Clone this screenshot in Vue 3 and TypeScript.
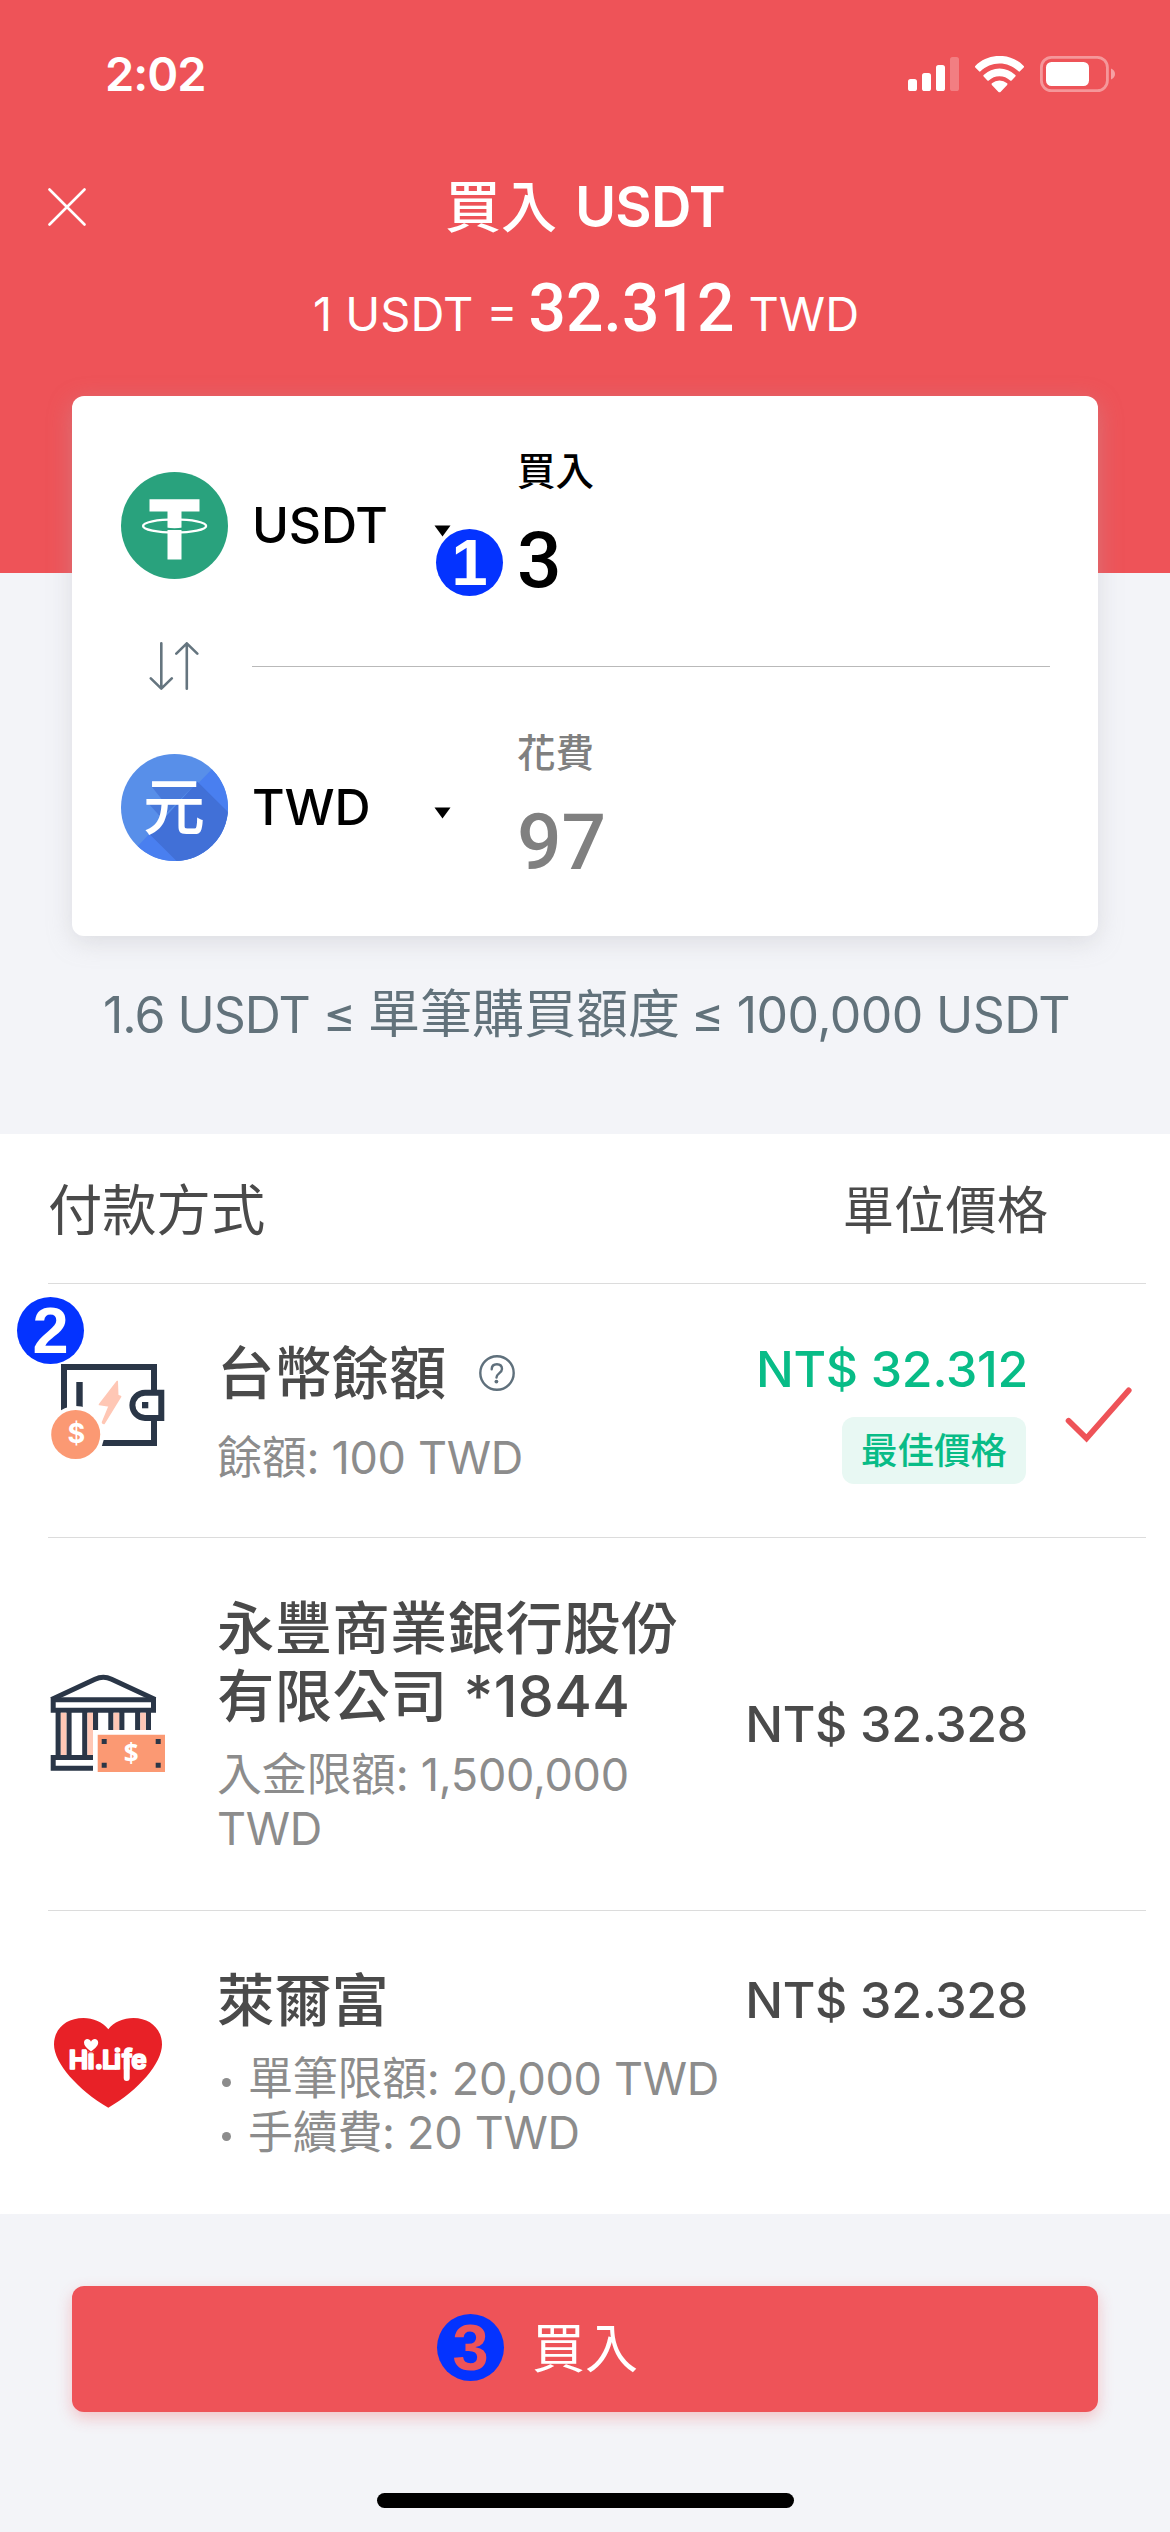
<script setup lang="ts">
interface PaymentMethod {
  id: 'wallet' | 'bank' | 'hilife'
  name: string
  suffix?: string
  notes: string[]
  bulleted: boolean
  price: string
  best: boolean
  selected: boolean
}

const methods: PaymentMethod[] = [
  { id: 'wallet', name: '台幣餘額', notes: ['餘額: 100 TWD'], bulleted: false, price: 'NT$ 32.312', best: true, selected: true },
  { id: 'bank', name: '永豐商業銀行股份有限公司 *1844', notes: ['入金限額: 1,500,000 TWD'], bulleted: false, price: 'NT$ 32.328', best: false, selected: false },
  { id: 'hilife', name: '萊爾富', notes: ['單筆限額: 20,000 TWD', '手續費: 20 TWD'], bulleted: true, price: 'NT$ 32.328', best: false, selected: false },
]
</script>

<template>
  <div class="screen">
    <header class="header">
      <div class="status">
        <span class="time">2:02</span>
        <div class="status-icons">
          <svg class="signal" width="52" height="36" viewBox="0 0 52 36" fill="#fff">
            <rect x="0" y="23" width="9" height="12" rx="2.6" />
            <rect x="14" y="17" width="9" height="18" rx="2.6" />
            <rect x="28" y="9" width="9" height="26" rx="2.6" />
            <rect x="42" y="1" width="9" height="34" rx="2.6" opacity=".25" />
          </svg>
          <svg class="wifi" width="49" height="37" viewBox="0 -.2 17 12.4" preserveAspectRatio="none" fill="#fff">
            <path d="M8.5 2.3c2.5 0 4.8.95 6.6 2.64a.36.36 0 0 0 .5 0l1.3-1.3a.37.37 0 0 0 0-.53c-4.7-4.48-12.1-4.48-16.8 0a.37.37 0 0 0 0 .53l1.3 1.3c.14.13.36.13.5 0C3.7 3.25 6 2.3 8.5 2.3Z" />
            <path d="M8.5 6.6c1.37 0 2.7.5 3.7 1.42.14.14.36.13.5 0l1.3-1.33a.38.38 0 0 0 0-.54 8.1 8.1 0 0 0-11 0 .38.38 0 0 0 0 .54l1.3 1.33c.14.13.36.14.5 0A5.4 5.4 0 0 1 8.5 6.6Z" />
            <path d="M11.15 9.5c.15-.14.15-.4-.01-.54a4.2 4.2 0 0 0-5.28 0 .38.38 0 0 0-.01.54l2.3 2.33c.1.1.22.1.35.1s.25 0 .35-.1l2.3-2.33Z" />
          </svg>
          <svg class="battery" width="76" height="36" viewBox="0 0 76 36">
            <rect x="1.4" y="1.4" width="66" height="33.2" rx="10" fill="none" stroke="#fff" stroke-opacity=".4" stroke-width="2.8" />
            <path d="M71 12.5c2.6.9 4 3 4 5.500s-1.400 4.600-4 5.500z" fill="#fff" fill-opacity=".45" />
            <rect x="6" y="6" width="43" height="24" rx="5.500" fill="#fff" />
          </svg>
        </div>
      </div>

      <div class="nav">
        <svg class="close" width="38" height="38" viewBox="0 0 38 38" stroke="#fff" stroke-width="2.6" stroke-linecap="round">
          <path d="M1.500 1.500 36.500 36.500M36.500 1.500 1.500 36.500" />
        </svg>
        <h1>買入 <b>USDT</b></h1>
      </div>

      <div class="rate">
        <span>1 USDT =</span>
        <strong>32.312</strong>
        <span>TWD</span>
      </div>
    </header>

    <section class="card">
      <div class="coin-row first">
        <svg width="107" height="107" viewBox="0 0 107 107">
          <circle cx="53.500" cy="53.500" r="53.500" fill="#29a27d" />
          <path d="M28.500 27.300h50v12.300h-18v48h-14v-48h-18z" fill="#fff" />
          <path d="M45 55.600q8.500 1.400 17 0v2.400h-17z" fill="#29a27d" />
          <ellipse cx="53.600" cy="54" rx="31.500" ry="6.600" fill="none" stroke="#fff" stroke-width="2.400" />
        </svg>
        <span class="code">USDT</span>
        <svg class="caret" width="17" height="12" viewBox="0 0 17 12"><path d="M.5.5h16L8.500 11.500z" /></svg>
        <div class="amount">
          <span class="label">買入</span>
          <span class="value">3</span>
        </div>
        <span class="step step-one">1</span>
      </div>

      <div class="swap">
        <svg width="50" height="48" viewBox="0 0 50 48" fill="none" stroke="#65757f" stroke-width="2.600" stroke-linecap="round" stroke-linejoin="round">
          <path d="M12.300 1.300v45.200M1.800 36.300 12.300 46.700 22.800 36.300M37.800 46.700V1.500M27.300 11.700 37.800 1.300 48.300 11.700" />
        </svg>
        <i class="rule"></i>
      </div>

      <div class="coin-row last">
        <svg width="107" height="107" viewBox="0 0 107 107">
          <clipPath id="disc"><circle cx="53.500" cy="53.500" r="53.500" /></clipPath>
          <g clip-path="url(#disc)">
            <rect width="107" height="107" fill="#588fe9" />
            <path d="M107-1.500V107H2.300z" fill="#497ff0" />
            <path d="M31 32h41.500L49 55.700 31 33zM26.800 48.700H56L40.500 64z" fill="#4879da" />
            <path d="M76.500 27.700 107 58v49H55.500L28.700 80.300z" fill="#4170d7" />
          </g>
          <text x="53" y="75.500" text-anchor="middle" class="yuan">元</text>
        </svg>
        <span class="code">TWD</span>
        <svg class="caret" width="17" height="12" viewBox="0 0 17 12"><path d="M.5.5h16L8.500 11.500z" /></svg>
        <div class="amount muted">
          <span class="label">花費</span>
          <span class="value">97</span>
        </div>
      </div>
    </section>

    <p class="limit">
      <span class="low">1.6 USDT ≤ </span><span class="mid">單筆購買額度</span><span class="high">≤ 100,000 USDT</span>
    </p>

    <section class="methods">
      <div class="list-head">
        <span>付款方式</span>
        <span class="unit">單位價格</span>
      </div>

      <div v-for="m in methods" :key="m.id" class="method" :class="m.id">
        <div class="icon">
          <svg v-if="m.id === 'wallet'" width="120" height="104" viewBox="0 0 120 104">
            <path d="M16 7h90v76H16z" fill="none" stroke="#2a3647" stroke-width="6" />
            <path d="M28.300 22h6.400v26h-6.400z" fill="#2a3647" />
            <path d="M69.200 21.500 69.700 35.500 72.600 36.500 56 63.500 54.300 62.700 61.200 46 51.500 44.500z" fill="#ffc7b5" stroke="#ffc7b5" stroke-width="1.600" stroke-linejoin="round" />
            <path d="M113.300 32.700H97a12.600 12.600 0 0 0 0 25.200h16.300z" fill="#fff" stroke="#2a3647" stroke-width="6" />
            <path d="M94 42h6.300v6.300H94z" fill="#2a3647" />
            <circle cx="27.700" cy="74.500" r="28.500" fill="#fff" />
            <circle cx="27.700" cy="74.500" r="24.500" fill="#fb9973" />
            <text x="28.300" y="83" text-anchor="middle" class="dollar">$</text>
          </svg>

          <svg v-else-if="m.id === 'bank'" width="120" height="104" viewBox="0 0 120 104">
            <g fill="none" stroke="#2a3647" stroke-width="5">
              <path d="M3.500 29.500 47 9.200Q55.300 5.400 63.600 9.200L107.200 29.500" />
              <path d="M5.200 29.800h100.300v10.400H5.200z" />
              <path d="M10.200 42v44M21 42v44M36.800 42v44M47.500 42v18M62.900 42v18M73.800 42v18M89.700 42v18M100.400 42v18" stroke-width="5.200" />
              <path d="M45 87.600H5.200v10.600H45" />
            </g>
            <path d="M12.800 42.700h5.600V85h-5.600zM39.400 42.700h5.600V85h-5.600zM65.500 42.700h5.700V60h-5.700zM92.300 42.700h5.500V60h-5.500z" fill="#ffc7b5" />
            <path d="M45 60h75v44H45z" fill="#fff" />
            <path d="M49.700 64.700H117V102H49.700z" fill="#fb9973" />
            <path d="M53.700 69h5v5h-5zM107.700 69h5v5h-5zM53.700 92.800h5v5h-5zM107.700 92.800h5v5h-5z" fill="#2a3647" />
            <text x="83.200" y="92.500" text-anchor="middle" class="dollar narrow">$</text>
          </svg>

          <svg v-else width="120" height="104" viewBox="0 0 120 104">
            <path d="M60.300 17.300C55 10 45 6 35.500 6 18 6 6 17 6 32.500 6 51 30 78 60.300 95.700 91 78 114 51 114 32.500 114 17 102 6 85.500 6 75.500 6 65.500 10 60.300 17.300z" fill="#e82127" />
            <text x="20.800 39.500 46.500 54 66 74 83.200" y="57" class="brand">Hi.Life</text>
            <circle cx="43" cy="35.500" r="5" fill="#e82127" />
            <path d="M43 39.500C38.300 36 36 33.500 36 30.500c0-4.200 5.500-4.700 7-.8 1.500-3.900 7.200-3.400 7.200.8 0 3-2.500 5.500-7.200 9z" fill="#fff" />
            <rect x="75.700" y="45" width="6" height="24" rx="3" fill="#fff" />
          </svg>
        </div>

        <div class="body">
          <div class="name">
            <span>{{ m.name }}</span>
            <svg v-if="m.id === 'wallet'" class="help" width="36" height="36" viewBox="0 0 36 36" fill="none" stroke="#5f707c" stroke-width="2.400" stroke-linecap="round">
              <circle cx="18" cy="18" r="16.700" />
              <path d="M12.700 14.300C12.700 11 14.800 9.200 17.900 9.200S23 11 23 14C23 18 17.500 18.200 17.500 22.600" />
              <circle cx="17.400" cy="26.600" r="1.900" fill="#5f707c" stroke="none" />
            </svg>
          </div>
          <ul v-if="m.bulleted" class="notes bulleted">
            <li v-for="n in m.notes" :key="n">{{ n }}</li>
          </ul>
          <p v-else class="notes">{{ m.notes[0] }}</p>
        </div>

        <div class="price">
          <span class="figure" :class="{ good: m.best }">{{ m.price }}</span>
          <span v-if="m.best" class="tag">最佳價格</span>
        </div>

        <div class="mark">
          <svg v-if="m.selected" width="68" height="56" viewBox="0 0 68 56" fill="none" stroke="#ee5358" stroke-width="5.800" stroke-linecap="round" stroke-linejoin="miter">
            <path d="M3.600 33.800 21.500 51.300 63.700 3.400" />
          </svg>
        </div>
        <span v-if="m.id === 'wallet'" class="step step-two">2</span>
      </div>
    </section>

    <footer class="footer">
      <button class="buy">買入<span class="step step-three">3</span></button>
      <i class="home"></i>
    </footer>
  </div>
</template>

<style>
body {
  margin: 0;
}
</style>

<style scoped>
.screen {
  display: flex;
  flex-direction: column;
  width: 1170px;
  height: 2532px;
  overflow: hidden;
  background: #f3f4f8;
  font-family: Inter, "Noto Sans CJK TC", sans-serif;
  color: #4a4a4a;
}
.screen * {
  box-sizing: border-box;
}
h1, p, ul {
  margin: 0;
  padding: 0;
}
svg {
  display: block;
  flex: none;
}

.header {
  height: 573px;
  flex: none;
  background: #ee5358;
  color: #fff;
}
.status {
  display: flex;
  justify-content: space-between;
  height: 148px;
  padding: 0 54px 0 105px;
}
.time {
  line-height: 148px;
  font-size: 47px;
  font-weight: 600;
  letter-spacing: -1px;
}
.status-icons {
  display: flex;
  align-items: center;
}
.wifi {
  margin: 0 16px 0 15px;
}
.nav {
  display: flex;
  align-items: center;
  justify-content: center;
  height: 118px;
  position: relative;
}
.close {
  position: absolute;
  left: 48px;
  top: 40px;
}
h1 {
  font-size: 56px;
  font-weight: 500;
  line-height: 80px;
  white-space: nowrap;
}
h1 b {
  margin-left: 3px;
  font-weight: 600;
  letter-spacing: -0.8px;
}
.rate {
  display: flex;
  justify-content: center;
  align-items: baseline;
  padding: 3px 0 0 2px;
  font-size: 47px;
  line-height: 80px;
}
.rate strong {
  margin: 0 14px 0 11px;
  font-family: Roboto, sans-serif;
  font-size: 66px;
  font-weight: 500;
}

.card {
  flex: none;
  height: 540px;
  margin: -177px 72px 0;
  border-radius: 12px;
  background: #fff;
  box-shadow: 0 6px 24px rgba(175, 175, 182, 0.34);
}
.coin-row {
  position: relative;
  display: flex;
  align-items: center;
  height: 246px;
  padding-left: 48.5px;
  color: #000;
}
.first {
  padding-top: 12px;
}
.last {
  padding-bottom: 12px;
}
.code {
  width: 182px;
  margin-left: 24.5px;
  font-size: 50px;
  font-weight: 500;
  line-height: 60px;
  letter-spacing: -0.2px;
}
.caret {
  margin-top: 11px;
}
.amount {
  display: flex;
  flex-direction: column;
  gap: 20px;
  margin: 1px 0 0 66px;
}
.label {
  font-size: 38.500px;
  line-height: 48px;
  font-weight: 500;
}
.value {
  font-family: Roboto, sans-serif;
  font-size: 78.500px;
  font-weight: 500;
  line-height: 90px;
}
.muted {
  color: #808080;
}
.yuan {
  font-size: 62px;
  font-weight: 500;
  fill: #fff;
}
.swap {
  display: flex;
  align-items: center;
  height: 48px;
  padding: 0 48px 0 77px;
}
.rule {
  flex: 1;
  height: 1px;
  margin: 1px 0 0 53px;
  background: #b9b9b9;
}

.step {
  position: absolute;
  width: 67px;
  height: 67px;
  border-radius: 50%;
  background: #0433ff;
  color: #fff;
  font: 700 65px/67px "Liberation Sans", sans-serif;
  text-align: center;
}
.step-one {
  left: 364px;
  top: 132.5px;
}
.step-two {
  left: -31px;
  top: 12.5px;
}
.step-three {
  left: 365px;
  top: 28px;
  color: #ee5358;
}

.limit {
  display: flex;
  flex: none;
  height: 198px;
  padding: 46px 0 0 103px;
  font-size: 50px;
  line-height: 66px;
  color: #62727b;
  white-space: pre;
}
.low {
  letter-spacing: -1px;
}
.mid {
  font-size: 52px;
}
.high {
  margin-left: 11px;
  letter-spacing: -0.6px;
}

.methods {
  flex: none;
  height: 1080px;
  padding: 0 24px 0 48px;
  background: #fff;
}
.list-head {
  display: flex;
  justify-content: space-between;
  align-items: center;
  height: 149px;
  padding: 0 98px 4px 0;
  font-size: 54.300px;
}
.unit {
  font-size: 51.300px;
}
.method {
  position: relative;
  display: flex;
  border-top: 1px solid #dcdcdc;
}
.wallet {
  height: 254px;
}
.bank {
  height: 373px;
}
.hilife {
  height: 304px;
}
.icon {
  width: 169px;
  flex: none;
}
.wallet .icon {
  padding-top: 76px;
}
.bank .icon {
  padding-top: 132px;
}
.hilife .icon {
  padding-top: 101px;
}
.dollar {
  font: 700 27px Inter, sans-serif;
  fill: #fff;
}
.narrow {
  font: 700 26px "Open Sans", sans-serif;
}
.brand {
  font: 700 26px Inter, sans-serif;
  fill: #fff;
  stroke: #fff;
  stroke-width: 1.6px;
  stroke-linejoin: round;
}
.body {
  width: 480px;
  flex: none;
  padding-top: 55px;
}
.name {
  display: flex;
  align-items: center;
  font-size: 57.300px;
  font-weight: 500;
  line-height: 68px;
}
.bank .body {
  padding-top: 56px;
}
.bank .name {
  letter-spacing: 0.400px;
}
.help {
  margin-left: 33px;
}
.notes {
  margin-top: 18px;
  font-size: 45px;
  line-height: 54px;
  letter-spacing: -0.3px;
  color: #8c8c8c;
}
.wallet .notes {
  margin-top: 24px;
}
.bulleted {
  list-style: none;
  white-space: nowrap;
}
.bulleted li {
  display: flex;
  align-items: center;
}
.bulleted li::before {
  content: "";
  flex: none;
  width: 9px;
  height: 9px;
  margin: 7px 17px 0 5px;
  border-radius: 50%;
  background: #8c8c8c;
}
.price {
  display: flex;
  flex-direction: column;
  align-items: flex-end;
  margin-left: auto;
  padding-top: 55px;
}
.figure {
  font-size: 50px;
  font-weight: 500;
  line-height: 60px;
  letter-spacing: -0.300px;
  white-space: nowrap;
}
.bank .price {
  justify-content: center;
  padding-top: 0;
}
.hilife .price {
  padding-top: 59px;
}
.good {
  color: #08bc87;
}
.tag {
  width: 184px;
  height: 67px;
  margin: 18px 2px 0 0;
  border-radius: 12px;
  background: #e8f8f3;
  color: #08bc87;
  font-size: 36.500px;
  font-weight: 500;
  line-height: 68px;
  text-align: center;
}
.mark {
  width: 118px;
  flex: none;
  padding: 103px 0 0 36.500px;
}

.footer {
  display: flex;
  flex-direction: column;
  align-items: center;
  height: 318px;
  padding-top: 72px;
}
.buy {
  position: relative;
  width: 1026px;
  height: 126px;
  padding: 0;
  border: 0;
  border-radius: 12px;
  background: #ee5358;
  box-shadow: 0 6px 15px rgba(238, 83, 88, 0.3);
  color: #fff;
  font: 400 53px/126px Inter, "Noto Sans CJK TC", sans-serif;
}
.home {
  width: 417px;
  height: 15px;
  margin-top: 81px;
  border-radius: 8px;
  background: #000;
}
</style>
